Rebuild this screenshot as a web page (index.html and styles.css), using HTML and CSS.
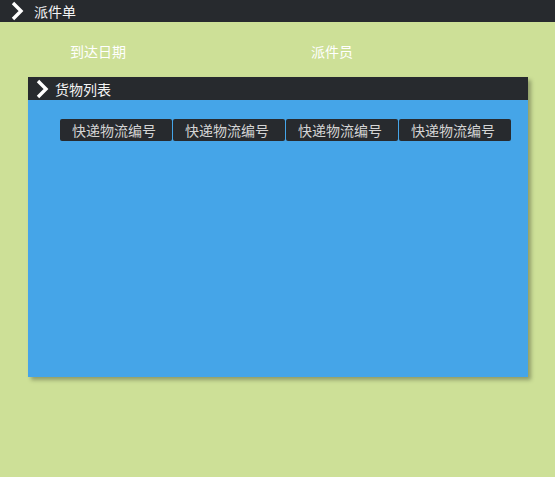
FILE: index.html
```html
<!DOCTYPE html>
<html lang="zh">
<head>
<meta charset="utf-8">
<link rel="stylesheet" href="styles.css">
</head>
<body>
<div class="topbar">
  <svg class="chev" width="14" height="20" viewBox="0 0 14 20"><path d="M3 2 L11 10 L3 18" fill="none" stroke="#fff" stroke-width="3.4"/></svg>
  <span class="title">派件单</span>
</div>
<div class="fields">
  <div class="field f1">到达日期</div>
  <div class="field">派件员</div>
</div>
<div class="panel">
  <div class="panel-head">
    <svg class="chev" width="14" height="20" viewBox="0 0 14 20"><path d="M3 2 L11 10 L3 18" fill="none" stroke="#fff" stroke-width="3.4"/></svg>
    <span class="title">货物列表</span>
  </div>
  <div class="cols">
    <div class="col">快递物流编号</div>
    <div class="col">快递物流编号</div>
    <div class="col">快递物流编号</div>
    <div class="col">快递物流编号</div>
  </div>
</div>
</body>
</html>
```
FILE: styles.css
```css
html, body {
  margin: 0;
  padding: 0;
}
body {
  background: #cde097;
  width: 555px;
  height: 477px;
  overflow: hidden;
  font-family: "Noto Sans CJK SC", "Noto Sans", sans-serif;
  font-size: 14px;
}
.topbar {
  height: 22px;
  background: #272a2e;
  display: flex;
  align-items: center;
  padding-left: 10px;
}
.chev {
  display: block;
  flex: none;
}
.title {
  color: #f4f4f4;
  margin-left: 10px;
  line-height: 22px;
}
.fields {
  display: flex;
  padding-left: 70px;
  height: 55px;
  align-items: center;
}
.field {
  color: #fff;
  line-height: 20px;
  margin-top: 3px;
}
.f1 {
  width: 241px;
}
.panel {
  margin-left: 28px;
  width: 500px;
  height: 300px;
  background: #45a5e8;
  box-shadow: 3px 3px 4px rgba(0, 0, 0, 0.3);
}
.panel-head {
  height: 23px;
  background: #272a2e;
  display: flex;
  align-items: center;
  padding-left: 7px;
}
.panel-head .title {
  margin-left: 6px;
}
.cols {
  display: flex;
  gap: 1px;
  padding: 19px 0 0 32px;
}
.col {
  width: 112px;
  height: 22px;
  background: #272a2e;
  border-radius: 2px;
  color: #d4d4d4;
  text-align: center;
  line-height: 22px;
  text-indent: -4px;
}
```
